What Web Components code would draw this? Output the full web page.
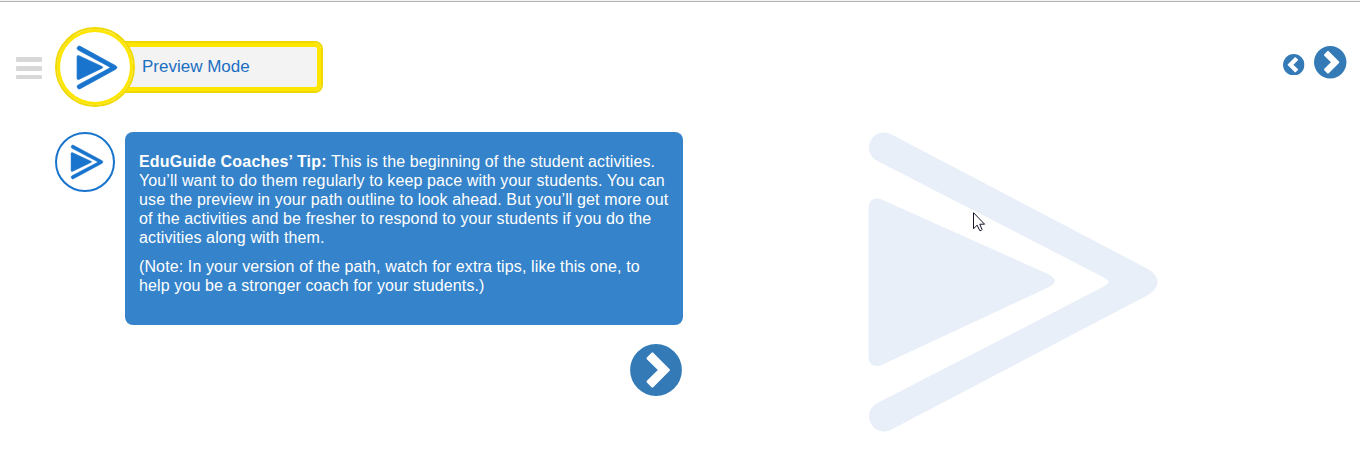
<!DOCTYPE html>
<html lang="en">
<head>
<meta charset="utf-8">
<title>EduGuide</title>
<style>
html,body{margin:0;height:100%;overflow:hidden;background:#fff}
body{font-family:"Liberation Sans",Arial,sans-serif}
</style>
</head>
<body>
<preview-page></preview-page>
<script>
const define = (name, html) => {
  const t = document.createElement('template');
  t.innerHTML = html;
  customElements.define(name, class extends HTMLElement {
    constructor() {
      super();
      this.attachShadow({mode: 'open'}).append(t.content.cloneNode(true));
    }
  });
};

define('brand-mark', `
<style>:host{display:block;color:#1874cd}svg{display:block;width:100%;height:100%;overflow:visible}path{stroke:currentColor;stroke-width:var(--mark-weight,0)}</style>
<svg viewBox="0 0 290 300" preserveAspectRatio="none" fill="currentColor">
<path d="M23.500 2.500L280 137Q289.500 143 289.500 150Q289.500 157 280 163L23.500 297.500A15 15 0 1 1 8.500 271.500L233 156Q241 151.500 241 150Q241 148.500 233 144L8.500 28.500A15 15 0 1 1 23.500 2.500Z"/>
<path d="M.5 76Q.5 66.500 9.500 66.500Q12 66.500 17 69L181 142.500Q187 146 187 148.500Q187 151.500 181 155L17 231.500Q12 234 9.500 234Q.5 234 .5 225Z"/>
</svg>`);

define('round-arrow', `
<style>:host{display:block}:host([back]){transform:scaleX(-1)}svg{display:block;width:100%;height:100%}path{stroke-width:var(--chevron-stroke,2.400px)}</style>
<svg viewBox="-26 -26 52 52"><circle r="25.900" fill="#337ab7"/>
<path d="M12.800 0L-3.600 16.400L-8.300 11.700L3.400 0L-8.300-11.700L-3.600-16.400Z" fill="#fff" stroke="#fff" stroke-linejoin="round"/></svg>`);

define('menu-bars', `
<style>:host{display:flex;flex-direction:column;gap:4px;width:26px}i{height:4.800px;border-radius:1px;background:#d8d8d8}</style><i></i><i></i><i></i>`);

define('mode-badge', `
<style>
:host{display:flex;align-items:center}
.disc{box-sizing:border-box;width:80px;height:80px;border-radius:50%;border:2px solid #efd900;box-shadow:inset 0 0 0 3px #fee600;background:#fff;display:grid;place-items:center;z-index:1}
brand-mark{width:40px;height:43px;margin-left:4px;--mark-weight:5px}
.label{box-sizing:border-box;width:208px;height:52px;margin-left:-20px;padding-left:25px;border:2px solid #efd900;border-radius:8px;background:#f3f3f3;color:#1b6ec2;font-size:17px;line-height:47px;position:relative}
.label::after{content:"";position:absolute;inset:0;border:4px solid #fee600;border-radius:6px}
</style>
<div class="disc"><brand-mark></brand-mark></div><div class="label"><slot></slot></div>`);

define('page-header', `
<style>
:host{display:flex;justify-content:space-between;box-sizing:border-box;height:130px;padding:25px 13.500px 0 16px}
.left{display:flex;align-items:flex-start;gap:13px}
menu-bars{margin-top:30px}
nav{display:flex;align-items:flex-start;gap:10px;margin-top:19px}
.prev{width:21.500px;height:21.500px;margin-top:7.500px;--chevron-stroke:4px}
.next{width:32.500px;height:32.500px;--chevron-stroke:3.400px}
</style>
<div class="left"><menu-bars></menu-bars><mode-badge>Preview Mode</mode-badge></div>
<nav><round-arrow class="prev" back></round-arrow><round-arrow class="next"></round-arrow></nav>`);

define('coach-tip', `
<style>
:host{display:flex;gap:10px;align-items:flex-start}
.avatar{box-sizing:border-box;width:60px;height:60px;border:2px solid #1874cd;border-radius:50%;display:grid;place-items:center}
brand-mark{width:32px;height:34px;margin-left:4px;--mark-weight:4px}
.box{box-sizing:border-box;width:558px;height:193px;padding:20px 14px;border-radius:8px;background:#3583ca;color:#fff;font-size:16px;line-height:19px;letter-spacing:.12px}
::slotted(p){margin:0 0 10px!important}
</style>
<div class="avatar"><brand-mark></brand-mark></div><div class="box"><slot></slot></div>`);

define('mouse-pointer', `
<style>:host{display:block;width:13px;height:21px}svg{display:block}</style>
<svg width="13" height="21"><path d="M.5.7V16.700L4.200 13.200L6.700 18.500Q8.300 19.200 9 17.600L6.800 12.200H11.600Z" fill="#fff" stroke="#14142a"/></svg>`);

define('preview-page', `
<style>
:host{display:block;height:461px;overflow:hidden;position:relative;background:#fff}
.rule{height:1px;background:#f4f4f4;border-bottom:1px solid #b2b2b2}
main{display:flex;padding-left:55px}
section{width:628px;display:flex;flex-direction:column}
b{letter-spacing:.18px}
.go{width:52px;height:52px;align-self:flex-end;margin:18.500px 1px 0 0}
.art{width:290px;height:300px;margin-left:185px;color:#e8eff8}
mouse-pointer{position:absolute;left:973px;top:212px}
</style>
<div class="rule"></div>
<page-header></page-header>
<main><section>
<coach-tip><p><b>EduGuide Coaches’ Tip:</b> This is the beginning of the student activities. You’ll want to do them regularly to keep pace with your students. You can use the preview in your path outline to look ahead. But you’ll get more out of the activities and be fresher to respond to your students if you do the activities along with them.</p><p>(Note: In your version of the path, watch for extra tips, like this one, to help you be a stronger coach for your students.)</p></coach-tip>
<round-arrow class="go"></round-arrow></section>
<brand-mark class="art"></brand-mark></main>
<mouse-pointer></mouse-pointer>
`);
</script>
</body>
</html>
